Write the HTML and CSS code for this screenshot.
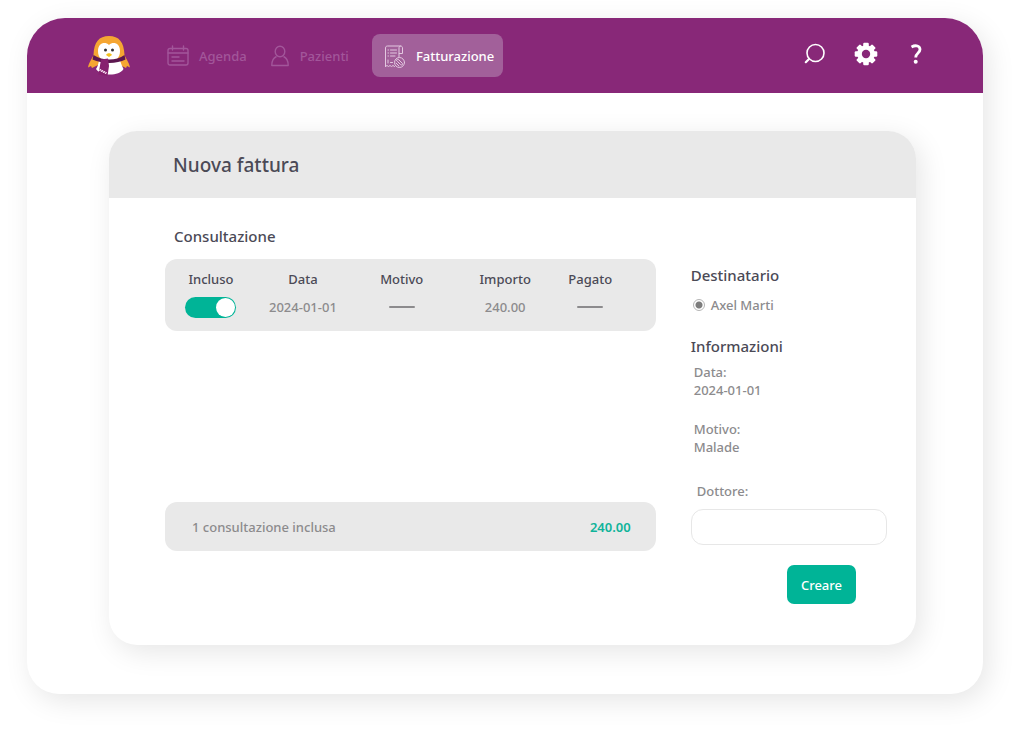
FILE: index.html
```html
<!DOCTYPE html>
<html lang="it">
<head>
<meta charset="utf-8">
<meta name="viewport" content="width=device-width, initial-scale=1">
<title>Nuova fattura</title>
<link rel="stylesheet" href="styles.css">
</head>
<body>
<div class="app">
  <header class="topbar">
    <a class="logo" href="#" aria-label="Home">
      <svg width="44" height="42" viewBox="0 0 44 42">
        <path d="M6.500 20 C7 7 12 1 22 1 C32 1 37 7 37.500 20 C39 24 42 27 43 32.500 L40 31 L39 33 L33 30 H11 L5 33 L4 31 L1 32.500 C2 27 5 24 6.500 20Z" fill="#f5a632"/>
        <path d="M22 10 C18 6 11 8 11 16 C11 23 15 26 22 26 C29 26 33 23 33 16 C33 8 26 6 22 10Z" fill="#fff"/>
        <path d="M12 25 H33 C34 29 35.500 32 36.500 34 C34 38 29 39.500 23 39.500 C17 39.500 12 38 9 34 C10.500 32 11.500 29 12 25Z" fill="#fff"/>
        <path d="M6.500 20 C16 26 29 26 37.500 20 L38.500 24.500 C30 29 15 29 5.500 24.500Z" fill="#5c174f"/>
        <path d="M14 24.500 L21 23.500 L22 31 L20.500 41 L11.500 39.500Z" fill="#86216f"/>
        <path d="M12.500 36 l1-2 1 3 1-2 1 3 1-2 1 3 1-2" stroke="#f3d9ee" stroke-width="1" fill="none"/>
        <circle cx="18.500" cy="15" r="1.500" fill="#333"/>
        <circle cx="25.500" cy="15" r="1.500" fill="#333"/>
        <path d="M19 20 C20 17.500 24 17.500 25 20 L22 22Z" fill="#f4c11c"/>
      </svg>
    </a>
    <nav class="nav">
      <a class="nav-item" href="#">
        <svg width="22" height="22" viewBox="0 0 22 22" fill="none" stroke="currentColor" stroke-width="1.400" stroke-linecap="round">
          <rect x="1" y="3.500" width="20" height="16.500" rx="2"/>
          <path d="M1 8H21M5.500 1V5M16.500 1V5M5 12H12M5 16H17"/>
        </svg>
        <span>Agenda</span>
      </a>
      <a class="nav-item" href="#">
        <svg width="20" height="22" viewBox="0 0 20 22" fill="none" stroke="currentColor" stroke-width="1.400" stroke-linejoin="round">
          <ellipse cx="10" cy="6.500" rx="4.800" ry="5.200"/>
          <path d="M6.500 11.500 C3 13 1.800 16 1.800 20.500 H18.200 C18.200 16 17 13 13.500 11.500"/>
        </svg>
        <span>Pazienti</span>
      </a>
      <a class="nav-item nav-item-active" href="#" aria-current="page">
        <svg width="22" height="24" viewBox="0 0 22 24" fill="none" stroke="currentColor" stroke-width="1" stroke-linecap="round" stroke-linejoin="round">
          <path d="M1.500 22.500V4C1.500 2.500 2.500 2 3.500 2H16.500C18 2 18.500 3 18.500 4V9.500H15V13M16.500 2C15.500 2 15 3 15 4V9.500"/>
          <path d="M1.500 22.500l1.500-1 1.500 1 1.500-1 1.500 1 1.500-1 1.500 1M4 6H4.500M6.500 6H12.500M4 9H4.500M6.500 9H12.500M4 12H4.500M6.500 12H11M4 16v3M6.500 18.500H8.500"/>
          <circle cx="15.500" cy="18.500" r="5"/>
          <path d="M12.500 16.500C12.500 15 14 15 15 16L18.500 19.500C19 21 17.500 21.500 16.500 20.500L13.500 17.500M12 19L15 22"/>
        </svg>
        <span>Fatturazione</span>
      </a>
    </nav>
    <div class="tools">
      <button class="tool" type="button" aria-label="Cerca">
        <svg width="24" height="24" viewBox="0 0 24 24" fill="none" stroke="currentColor" stroke-linecap="round">
          <circle cx="12.500" cy="11" r="8.500" stroke-width="1.600"/>
          <path d="M6 17L2.800 20.200" stroke-width="2.200"/>
        </svg>
      </button>
      <button class="tool" type="button" aria-label="Impostazioni">
        <svg width="24" height="24" viewBox="0 0 24 24">
          <g fill="currentColor">
            <rect x="9.200" y="0.700" width="5.600" height="22.600" rx="1.200"/>
            <rect x="9.200" y="0.700" width="5.600" height="22.600" rx="1.200" transform="rotate(45 12 12)"/>
            <rect x="9.200" y="0.700" width="5.600" height="22.600" rx="1.200" transform="rotate(90 12 12)"/>
            <rect x="9.200" y="0.700" width="5.600" height="22.600" rx="1.200" transform="rotate(135 12 12)"/>
            <circle cx="12" cy="12" r="8.800"/>
          </g>
          <circle cx="12" cy="12" r="4.200" fill="#882878"/>
        </svg>
      </button>
      <button class="tool" type="button" aria-label="Aiuto">
        <svg width="24" height="24" viewBox="0 0 24 24" fill="none" stroke="currentColor" stroke-width="2.800">
          <path d="M6.500 5C11 2.500 15 4 15 7.500C15 11 10.700 11 10.700 15.500"/>
          <circle cx="10.700" cy="19.800" r="2" fill="currentColor" stroke="none"/>
        </svg>
      </button>
    </div>
  </header>

  <main class="content">
    <section class="card">
      <header class="card-head"><h1>Nuova fattura</h1></header>
      <form class="card-body">
        <div class="consults">
          <h2 class="consults-title">Consultazione</h2>
          <div class="panel">
            <table class="table">
              <thead>
                <tr><th class="col-included">Incluso</th><th class="col-date">Data</th><th class="col-reason">Motivo</th><th class="col-amount">Importo</th><th class="col-paid">Pagato</th></tr>
              </thead>
              <tbody>
                <tr>
                  <td><input class="switch" type="checkbox" role="switch" aria-label="Incluso" checked></td>
                  <td>2024-01-01</td>
                  <td><span class="dash"></span></td>
                  <td>240.00</td>
                  <td><span class="dash"></span></td>
                </tr>
              </tbody>
            </table>
          </div>
          <div class="panel summary">
            <span>1 consultazione inclusa</span>
            <strong>240.00</strong>
          </div>
        </div>

        <div class="details">
          <h2>Destinatario</h2>
          <label class="recipient"><input class="radio" type="radio" name="recipient" checked>Axel Marti</label>
          <h2>Informazioni</h2>
          <dl class="info">
            <div><dt>Data:</dt><dd>2024-01-01</dd></div>
            <div><dt>Motivo:</dt><dd>Malade</dd></div>
          </dl>
          <label class="field-label" for="doctor">Dottore:</label>
          <input class="field" id="doctor" type="text">
          <button class="submit" type="button">Creare</button>
        </div>
      </form>
    </section>
  </main>
</div>
</body>
</html>
```
FILE: styles.css
```css
* {
  box-sizing: border-box;
}

body {
  min-height: 100vh;
  margin: 0;
  padding: 18px 41px 44px 27px;
  display: flex;
  background: #fff;
  color: #8c8b8d;
  font: 500 13px/18px "Noto Sans", "Open Sans", sans-serif;
}

h1,
h2,
dl,
dd {
  margin: 0;
}

h1,
h2 {
  color: #4b4a56;
  font-weight: 500;
}

h1 {
  font-size: 19px;
  line-height: 28px;
}

h2 {
  font-size: 15px;
  line-height: 20px;
}

button,
input {
  font: inherit;
}

.app {
  flex: 1;
  display: flex;
  flex-direction: column;
  border-radius: 38px 38px 32px 32px;
  background: #fff;
  box-shadow: 5px 7px 28px rgba(0, 0, 0, 0.1);
}

.topbar {
  display: flex;
  align-items: center;
  height: 75px;
  padding: 0 54px 0 60px;
  border-radius: 38px 38px 0 0;
  background: #882878;
}

.logo {
  display: flex;
}

.nav {
  flex: 1;
  display: flex;
  align-items: center;
  gap: 23px;
  margin-left: 36px;
}

.nav-item {
  display: flex;
  align-items: center;
  gap: 10px;
  color: #a2569a;
  text-decoration: none;
}

.nav-item-active {
  height: 43px;
  padding: 0 9px 0 12px;
  border-radius: 8px;
  background: #a2609a;
  color: #fff;
}

.nav-item-active svg {
  color: #e3c8e0;
}

.tools {
  display: flex;
  gap: 27px;
  padding-bottom: 3px;
}

.tool {
  display: flex;
  padding: 0;
  border: 0;
  background: none;
  color: #fff;
}

.content {
  flex: 1;
  display: flex;
  padding: 38px 67px 49px 82px;
}

.card {
  flex: 1;
  display: flex;
  flex-direction: column;
  border-radius: 28px;
  background: #fff;
  box-shadow: 5px 7px 28px rgba(0, 0, 0, 0.1);
}

.card-head {
  padding: 20px 64px 19px;
  border-radius: 28px 28px 0 0;
  background: #e9e9e9;
}

.card-body {
  flex: 1;
  display: grid;
  grid-template-columns: 5fr 2fr;
  gap: 35px;
  padding: 28px 29px 40px 56px;
}

.consults {
  display: flex;
  flex-direction: column;
}

.consults-title {
  margin: 0 0 13px 9px;
}

.panel {
  border-radius: 12px;
  background: #e9e9e9;
}

.table {
  width: 100%;
  padding: 10px 31px 10px 0;
  border-spacing: 0;
  table-layout: fixed;
  text-align: center;
}

.table th {
  height: 20px;
  padding: 0;
  color: #4b4a56;
  font-weight: 500;
}

.table td {
  height: 32px;
  padding: 4px 0 0;
  vertical-align: middle;
}

.col-included,
.col-date {
  width: 20%;
}

.col-reason {
  width: 23%;
}

.col-amount {
  width: 22%;
}

.col-paid {
  width: 15%;
}

.switch {
  display: flex;
  justify-content: flex-start;
  width: 51px;
  height: 21px;
  margin: 0 auto;
  padding: 1px;
  border-radius: 11px;
  background: #bbb;
  appearance: none;
}

.switch::before {
  content: "";
  width: 19px;
  height: 19px;
  border-radius: 50%;
  background: #fff;
}

.switch:checked {
  justify-content: flex-end;
  background: #00b497;
}

.dash {
  display: block;
  width: 26px;
  height: 2px;
  margin: 0 auto;
  border-radius: 1px;
  background: #8c8b8d;
}

.summary {
  display: flex;
  align-items: center;
  justify-content: space-between;
  height: 49px;
  margin-top: auto;
  margin-bottom: 54px;
  padding: 0 25px 0 27px;
}

.summary strong {
  color: #10b49a;
  font-weight: 600;
}

.details {
  display: flex;
  flex-direction: column;
  padding-top: 39px;
}

.recipient {
  display: flex;
  align-items: center;
  gap: 6px;
  margin: 11px 0 22px 2px;
}

.radio {
  width: 12px;
  height: 12px;
  margin: 0;
  border: 1px solid #b5b5b5;
  border-radius: 50%;
  appearance: none;
}

.radio:checked {
  background: radial-gradient(circle, #7d7d7d 3px, #fff 4px);
}

.info {
  display: grid;
  gap: 21px;
  margin: 7px 0 26px 3px;
}

.field-label {
  margin: 0 0 9px 6px;
}

.field {
  width: 100%;
  height: 36px;
  padding: 0 12px;
  border: 1px solid #e7e7e7;
  border-radius: 12px;
  background: #fff;
}

.submit {
  align-self: flex-end;
  height: 39px;
  margin: 20px 31px 0 0;
  padding: 0 14px;
  border: 0;
  border-radius: 7px;
  background: #00b497;
  color: #fff;
}
```
